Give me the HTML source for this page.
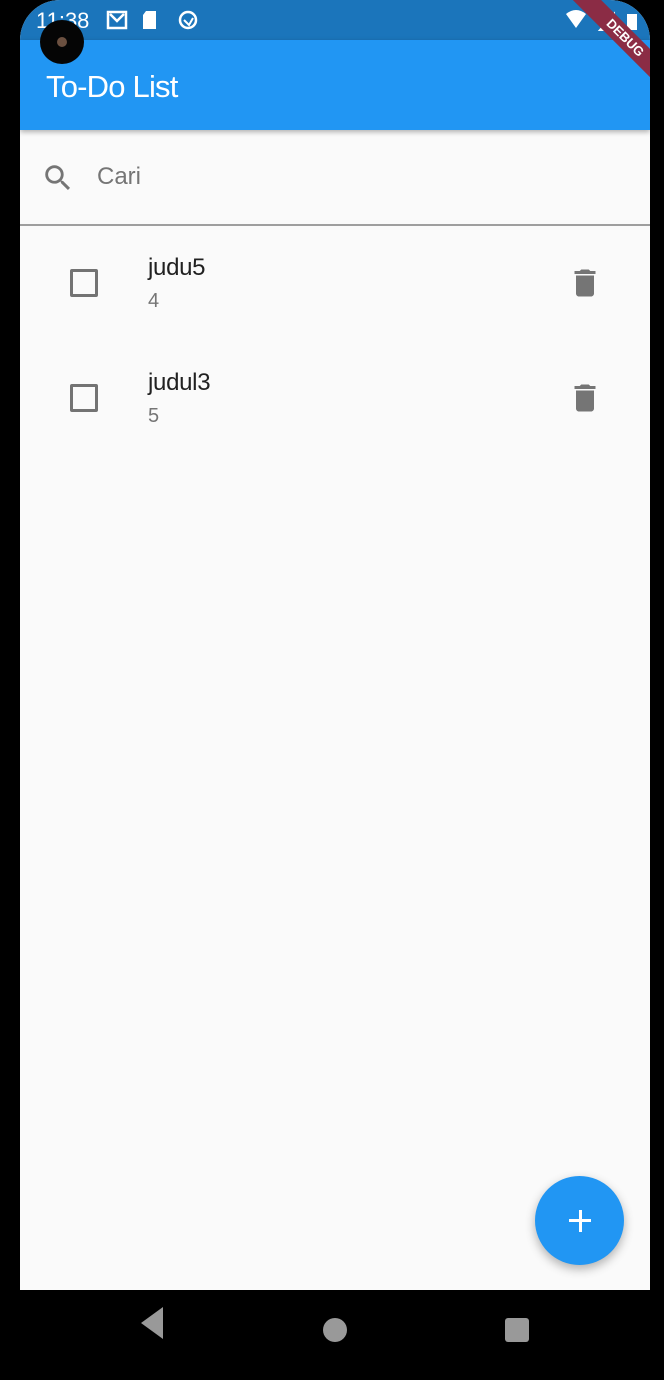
<!DOCTYPE html>
<html><head><style>
*{margin:0;padding:0;box-sizing:border-box}
body{width:664px;height:1380px;background:#000;position:relative;overflow:hidden;font-family:"Liberation Sans",sans-serif}
.screen{position:absolute;left:20px;top:0;width:630px;height:1290px;background:#fafafa;border-radius:40px 40px 0 0;overflow:hidden}
.status{position:absolute;left:0;top:0;width:630px;height:40px;background:#1b75bb;color:#fff}
.appbar{position:absolute;left:0;top:40px;width:630px;height:90px;background:#2196f3;box-shadow:0 2px 5px rgba(0,0,0,.3)}
.appbar h1{position:absolute;left:26px;top:29px;font-size:31px;font-weight:normal;color:#fff;letter-spacing:-0.8px}
.search{position:absolute;left:0;top:130px;width:630px;height:96px;border-bottom:2px solid #9e9e9e}
.cari{position:absolute;left:77px;top:33px;font-size:24px;color:#757575}
.item{position:absolute;left:0;width:630px;height:110px}
.cb{position:absolute;left:50px;width:28px;height:28px;border:3px solid #737373;border-radius:2px}
.t{position:absolute;left:128px;font-size:24px;color:#212121;letter-spacing:-0.3px}
.s{position:absolute;left:128px;font-size:20px;color:#757575}
.fab{position:absolute;left:515px;top:1176px;width:89px;height:89px;border-radius:50%;background:#2196f3;box-shadow:0 4px 10px rgba(0,0,0,.3)}
</style></head><body>
<div class="screen">
 <div class="status">
  <div style="position:absolute;left:16px;top:8px;font-size:22px">11:38</div>
  <svg style="position:absolute;left:86px;top:10px" width="100" height="22" viewBox="0 0 100 22"><rect x="2" y="2" width="18" height="16" fill="none" stroke="#fff" stroke-width="2.5"/><path d="M4 4 L11 11 L18 4" stroke="#fff" stroke-width="2.5" fill="none"/><path d="M40 1h10v18h-13V5z" fill="#fff"/><circle cx="82" cy="10" r="8" fill="none" stroke="#fff" stroke-width="2.5"/><path d="M78 10l5 5 4-7" stroke="#fff" stroke-width="2" fill="none"/></svg>
  <svg style="position:absolute;left:544px;top:8px" width="80" height="26"><path d="M2 6 Q12 -2 22 6 L12 20z" fill="#fff"/><path d="M36 22 L50 6 V22z" fill="none" stroke="#fff" stroke-width="2"/><rect x="63" y="6" width="10" height="16" fill="#fff"/></svg>
 </div>
 <div style="position:absolute;left:20px;top:20px;width:44px;height:44px;border-radius:50%;background:#050505;z-index:5"><div style="position:absolute;left:17px;top:17px;width:10px;height:10px;border-radius:50%;background:#6b5040"></div></div>
 <div class="appbar"><h1>To-Do List</h1></div>
 <div style="position:absolute;left:530px;top:28px;width:150px;height:20px;background:#8b2c45;transform:rotate(45deg);color:#fff;font-size:13px;font-weight:bold;text-align:center;line-height:20px;z-index:6">DEBUG</div>
 <div class="search">
  <svg style="position:absolute;left:21px;top:31px" width="34" height="34" viewBox="0 0 24 24"><path fill="#757575" d="M15.5 14h-.79l-.28-.27A6.470 6.470 0 0 0 16 9.5 6.5 6.5 0 1 0 9.5 16c1.61 0 3.090-.59 4.230-1.57l.27.28v.79l5 4.99L20.49 19l-4.99-5zm-6 0C7.01 14 5 11.99 5 9.5S7.01 5 9.5 5 14 7.01 14 9.5 11.99 14 9.5 14z"/></svg>
  <div class="cari">Cari</div>
 </div>
 <div class="item" style="top:228px">
  <div class="cb" style="top:41px"></div>
  <div class="t" style="top:26px">judu5</div>
  <div class="s" style="top:62px">4</div>
  <svg style="position:absolute;left:547px;top:37px" width="36" height="36" viewBox="0 0 24 24"><path fill="#757575" d="M6 19c0 1.1.9 2 2 2h8c1.1 0 2-.9 2-2V7H6v12zM19 4h-3.5l-1-1h-5l-1 1H5v2h14V4z"/></svg>
 </div>
 <div class="item" style="top:343px">
  <div class="cb" style="top:41px"></div>
  <div class="t" style="top:26px">judul3</div>
  <div class="s" style="top:62px">5</div>
  <svg style="position:absolute;left:547px;top:37px" width="36" height="36" viewBox="0 0 24 24"><path fill="#757575" d="M6 19c0 1.1.9 2 2 2h8c1.1 0 2-.9 2-2V7H6v12zM19 4h-3.5l-1-1h-5l-1 1H5v2h14V4z"/></svg>
 </div>
 <div class="fab"><div style="position:absolute;left:34px;top:43px;width:22px;height:3px;background:#fff"></div><div style="position:absolute;left:43.5px;top:34px;width:3px;height:22px;background:#fff"></div></div>
</div>
<svg style="position:absolute;left:0;top:1290px" width="664" height="90"><path d="M163 17 L163 49 L141 33z" fill="#999"/><ellipse cx="335" cy="40" rx="12" ry="12" fill="#999"/><rect x="505" y="28" width="24" height="24" rx="3" fill="#999"/></svg>
</body></html>
